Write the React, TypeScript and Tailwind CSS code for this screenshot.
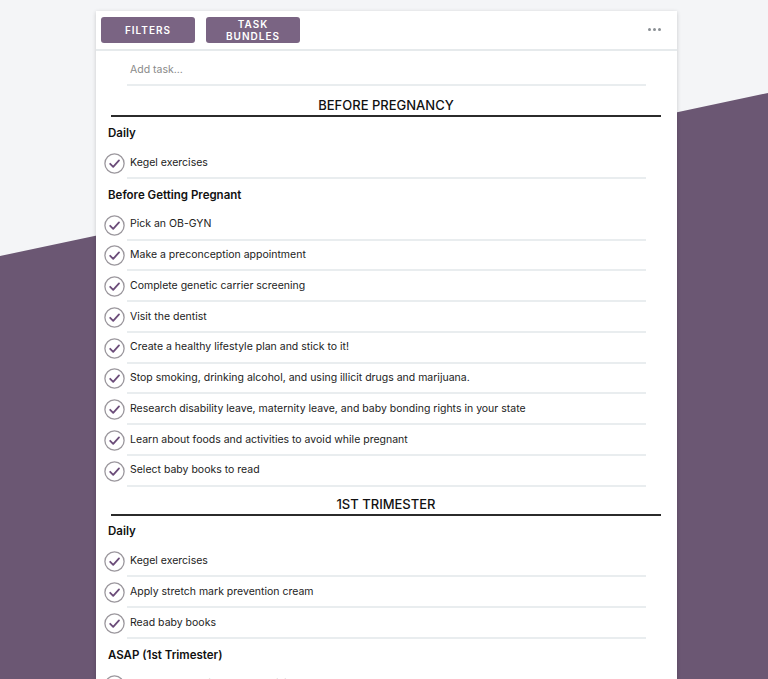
import React from 'react';

type Group = { title: string; tasks: string[] };
type Section = { title: string; groups: Group[] };

const sections: Section[] = [
  {
    title: 'BEFORE PREGNANCY',
    groups: [
      { title: 'Daily', tasks: ['Kegel exercises'] },
      {
        title: 'Before Getting Pregnant',
        tasks: [
          'Pick an OB-GYN',
          'Make a preconception appointment',
          'Complete genetic carrier screening',
          'Visit the dentist',
          'Create a healthy lifestyle plan and stick to it!',
          'Stop smoking, drinking alcohol, and using illicit drugs and marijuana.',
          'Research disability leave, maternity leave, and baby bonding rights in your state',
          'Learn about foods and activities to avoid while pregnant',
          'Select baby books to read',
        ],
      },
    ],
  },
  {
    title: '1ST TRIMESTER',
    groups: [
      { title: 'Daily', tasks: ['Kegel exercises', 'Apply stretch mark prevention cream', 'Read baby books'] },
      { title: 'ASAP (1st Trimester)', tasks: ['Schedule your first prenatal visit'] },
    ],
  },
];

function CheckCircle() {
  return (
    <svg width="21" height="21" viewBox="0 0 21 21" className="shrink-0">
      <circle cx="10.5" cy="10.5" r="9.6" fill="none" stroke="#9b979d" strokeWidth="1.3" />
      <path d="M6.2 10.8 L9.2 13.8 L15 7.4" fill="none" stroke="#6b4c79" strokeWidth="1.8" strokeLinecap="round" strokeLinejoin="round" />
    </svg>
  );
}

function TaskRow({ text }: { text: string }) {
  return (
    <div className="flex items-center pl-[8px]">
      <CheckCircle />
      <div className="ml-[2px] mr-[31px] flex h-[30.75px] flex-1 items-center border-b-2 border-[#e9edef] pl-[3px] text-[10.5px] text-[#222]">
        {text}
      </div>
    </div>
  );
}

export default function App() {
  return (
    <div className="relative min-h-screen overflow-hidden bg-[#f4f5f7] font-['Inter',sans-serif]">
      <div className="absolute inset-0 bg-[#6b5773] [clip-path:polygon(0_256px,100%_93px,100%_100%,0_100%)]" />
      <div className="relative ml-[96px] mt-[11px] w-[581px] bg-white shadow-[0_1px_4px_rgba(0,0,0,0.18)]">
        <div className="flex h-[40px] items-start border-b-2 border-[#e6eaec] pl-[5px] pr-[16px] pt-[6px]">
          <button className="flex h-[26px] w-[94px] items-center justify-center rounded-[3px] bg-[#7a6483] text-[10px] font-semibold tracking-[1px] text-white">
            FILTERS
          </button>
          <button className="ml-[11px] flex h-[26px] w-[94px] items-center justify-center rounded-[3px] bg-[#7a6483] text-[10px] font-semibold leading-[12px] tracking-[1px] text-white">
            TASK<br />BUNDLES
          </button>
          <div className="ml-auto mt-[11px] flex gap-[2px]">
            <span className="h-[3px] w-[3px] rounded-full bg-[#8a8f94]" />
            <span className="h-[3px] w-[3px] rounded-full bg-[#8a8f94]" />
            <span className="h-[3px] w-[3px] rounded-full bg-[#8a8f94]" />
          </div>
        </div>
        <div className="ml-[31px] mr-[31px] flex h-[35px] items-center border-b-2 border-[#e9edef] pl-[3px] pt-[5px] text-[10.5px] text-[#8a8a8a]">
          Add task...
        </div>
        {sections.map((s, i) => (
          <div key={s.title}>
            <div className={i === 0 ? 'ml-[15px] mr-[16px] pt-[11px]' : 'ml-[15px] mr-[16px] pt-[9px]'}>
              <div className="text-center text-[13px] font-medium leading-[16px] text-[#111]">{s.title}</div>
              <div className="mt-[2px] h-[2px] bg-[#2b2b2b]" />
            </div>
            {s.groups.map(g => (
              <div key={g.title}>
                <div className="flex h-[31px] items-center pl-[12px] pt-[2px] text-[11.5px] font-semibold text-[#111]">{g.title}</div>
                {g.tasks.map(t => (
                  <TaskRow key={t} text={t} />
                ))}
              </div>
            ))}
          </div>
        ))}
      </div>
    </div>
  );
}
